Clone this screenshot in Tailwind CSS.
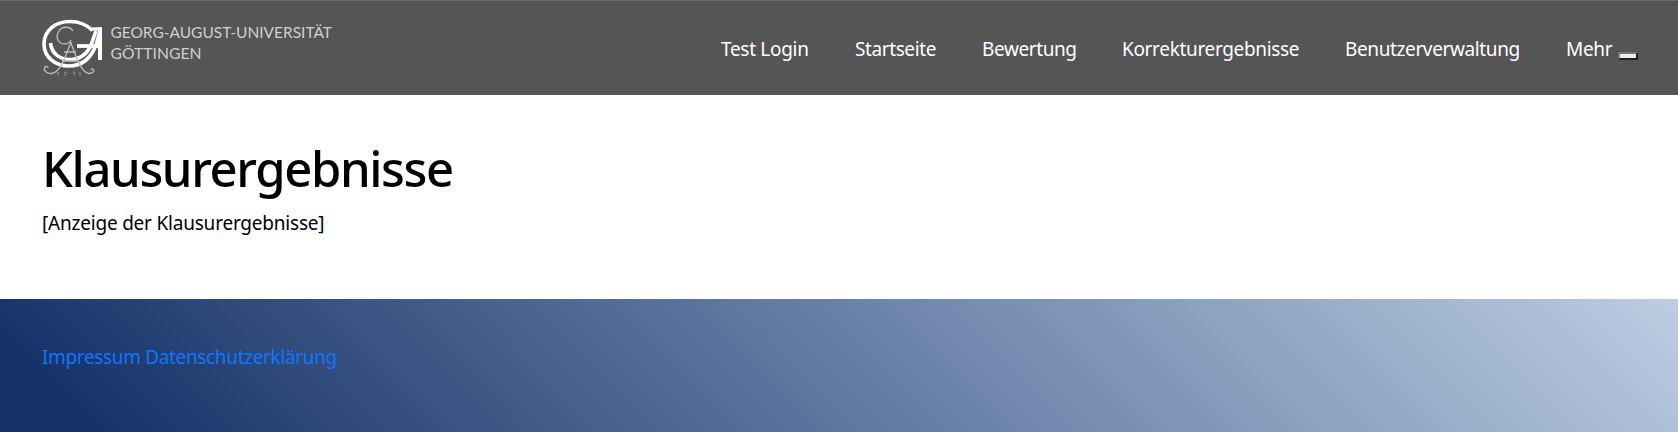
<!DOCTYPE html>
<html lang="de">
<head>
<meta charset="utf-8">
<title>Klausurergebnisse</title>
<script src="https://cdn.jsdelivr.net/npm/@tailwindcss/browser@4"></script>
</head>
<body class="flex h-screen flex-col overflow-hidden bg-white font-['Segoe_UI','Noto_Sans',sans-serif] text-[19px] leading-[30px] text-black">
<header class="flex h-[95px] shrink-0 justify-between border-t border-[#6a6a6a] bg-[#555555] pl-[42px] pr-10">
  <a class="block pt-[18px]">
    <svg width="292" height="60" viewBox="42 19 292 60" fill="none" aria-label="Georg-August-Universität Göttingen">
      <g stroke="#fff">
        <path d="M92.500 30.500C86 24 78 21.500 70 21.500C55 21.500 44 31 44 44C44 57 55 66 69 66C83 66 91 58 96 45L100 31" stroke-width="3.600"/>
        <path d="M50.500 43C51.500 53 59 59.500 70 59.500C80 59.500 87 54 91 45L96 31" stroke-width="3.600"/>
        <path d="M100 27.500V60" stroke-width="4"/>
        <path d="M92 29H102" stroke-width="3.400"/>
        <path d="M77 46H100" stroke-width="3.800"/>
      </g>
      <g stroke="#bdbdbd" stroke-width="1.300">
        <path d="M73 31C70 26 62 26 59 31C55 37 58 44 65 44C68 44 70 42 71 40"/>
        <path d="M71 42C66 54 61 73 51 73.500C46 73.500 43 70 45 67C46 66 48 66 48 68"/>
        <path d="M70.500 42C76 56 81 73 89 73.500C93 73.500 95 71 93 69.500C92 68.500 91 69 91 70"/>
        <path d="M64 52H76M62 61H79"/>
      </g>
      <path stroke="#999" stroke-width="1" d="M57 73L58 72V75.500M64 73C66 71 68 73 66 74.500L64 75.500M73 72L75 73L74 74L75 75.500M80 72V75.500"/>
      <g fill="#cfcfcf" font-family="Lato" font-size="15">
        <text x="110.500" y="38" textLength="221.500" lengthAdjust="spacingAndGlyphs">GEORG-AUGUST-UNIVERSITÄT</text>
        <text x="110.500" y="59" textLength="91" lengthAdjust="spacingAndGlyphs">GÖTTINGEN</text>
      </g>
    </svg>
  </a>
  <nav class="flex whitespace-nowrap pt-[33px] text-white">
    <a class="w-[134px] tracking-[-0.3px]">Test Login</a>
    <a class="w-[127px] tracking-[-0.4px]">Startseite</a>
    <a class="w-[140px] tracking-[-0.4px]">Bewertung</a>
    <a class="w-[223px] tracking-[-0.33px]">Korrekturergebnisse</a>
    <a class="w-[221px] tracking-[-0.38px]">Benutzerverwaltung</a>
    <a class="w-[52px] tracking-[-0.3px]">Mehr</a>
    <button class="mt-[18px] h-2 w-5 border-2 border-t-[#767676] border-l-[#767676] border-r-[#212121] border-b-[#212121] bg-[#efefef]" aria-label="Mehr anzeigen"></button>
  </nav>
</header>
<main class="h-[204px] shrink-0 px-[42px] pt-[43px]">
  <h1 class="text-[49px] leading-[60px] font-medium tracking-[-1.38px]">Klausurergebnisse</h1>
  <p class="mt-[10px] tracking-[-0.21px]">[Anzeige der Klausurergebnisse]</p>
</main>
<footer class="h-[133px] shrink-0 bg-[linear-gradient(45deg,#153268_5%,#bccde3)] px-[42px] pt-[43px] text-[#0d77fd] tracking-[-0.35px]">
  <a>Impressum</a>
  <a>Datenschutzerklärung</a>
</footer>
</body>
</html>
